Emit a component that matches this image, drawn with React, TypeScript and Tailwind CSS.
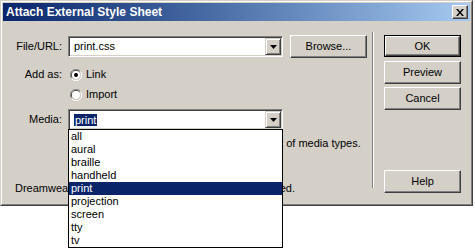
const FONT = "font-['Liberation_Sans',Arial,sans-serif]"

const MEDIA = ['all', 'aural', 'braille', 'handheld', 'print', 'projection', 'screen', 'tty', 'tv']

function DropButton() {
  return (
    <div className="w-[16px] h-full flex items-center justify-center bg-[#d4d0c8] border border-t-[#d4d0c8] border-l-[#d4d0c8] border-r-[#404040] border-b-[#404040] shadow-[inset_1px_1px_0_#ffffff,inset_-1px_-1px_0_#808080]">
      <svg width="7" height="4" viewBox="0 0 7 4">
        <path d="M0 0h7L3.5 4z" fill="#000" />
      </svg>
    </div>
  )
}

function Combo({ value, selected, h }: { value: string; selected?: boolean; h: string }) {
  return (
    <div className={`w-[215px] ${h} flex bg-white border border-t-[#808080] border-l-[#808080] border-r-white border-b-white shadow-[inset_1px_1px_0_#404040,inset_-1px_-1px_0_#d4d0c8] p-[1px]`}>
      <div className="flex-1 flex items-center pl-[4px]">
        {selected ? (
          <span className="bg-[#0a246a] text-white leading-[12px] px-[1px]">{value}</span>
        ) : (
          <span>{value}</span>
        )}
      </div>
      <DropButton />
    </div>
  )
}

function Btn({ label, def, cls = '' }: { label: string; def?: boolean; cls?: string }) {
  const inner = (
    <div className="w-full h-full flex items-center justify-center bg-[#d4d0c8] border border-t-white border-l-white border-r-[#404040] border-b-[#404040] shadow-[inset_-1px_-1px_0_#808080]">
      {label}
    </div>
  )
  if (def) {
    return <div className={`w-[77px] h-[22px] border border-black ${cls}`}>{inner}</div>
  }
  return <div className={`w-[77px] h-[23px] ${cls}`}>{inner}</div>
}

function Radio({ checked }: { checked?: boolean }) {
  return (
    <svg width="12" height="12" viewBox="0 0 12 12">
      <path d="M10.5 2.5A5.5 5.5 0 0 0 1.5 9.5" stroke="#808080" fill="none" />
      <path d="M9.6 3.2A4.5 4.5 0 0 0 2.4 8.8" stroke="#404040" fill="none" />
      <circle cx="6" cy="6" r="4" fill="#fff" />
      <path d="M1.5 9.5A5.5 5.5 0 0 0 10.5 2.5" stroke="#fff" fill="none" />
      <path d="M2.4 8.8A4.5 4.5 0 0 0 9.6 3.2" stroke="#d4d0c8" fill="none" />
      {checked && <circle cx="6" cy="6" r="2" fill="#000" />}
    </svg>
  )
}

export default function App() {
  return (
    <div className={`relative w-[475px] h-[249px] bg-white overflow-hidden text-[11px] text-black ${FONT}`}>
      <div className="w-[473px] h-[206px] border border-t-[#d4d0c8] border-l-[#d4d0c8] border-r-[#404040] border-b-[#404040]">
        <div className="h-full border border-t-white border-l-white border-r-[#808080] border-b-[#808080] bg-[#d4d0c8] p-[1px] flex flex-col">
          {/* title bar */}
          <div className="h-[18px] flex items-center justify-between bg-gradient-to-r from-[#0a246a] to-[#a6caf0] pl-[3px] pr-[2px]">
            <span className="text-white font-bold text-[12px]">Attach External Style Sheet</span>
            <div className="w-[16px] h-[14px] flex items-center justify-center bg-[#d4d0c8] border border-t-white border-l-white border-r-[#404040] border-b-[#404040] shadow-[inset_-1px_-1px_0_#808080]">
              <svg width="8" height="7" viewBox="0 0 8 7">
                <path d="M0 0h2l2 2.5L6 0h2L5 3.5 8 7H6L4 4.5 2 7H0l3-3.5z" fill="#000" />
              </svg>
            </div>
          </div>

          <div className="flex flex-1">
            {/* form */}
            <div className="w-[369px] pt-[14px]">
              <div className="flex items-center">
                <div className="w-[60px] text-right pr-[1px]">File/URL:</div>
                <div className="ml-[5px]">
                  <Combo value="print.css" h="h-[21px]" />
                </div>
                <Btn label="Browse..." cls="ml-[7px]" />
              </div>

              <div className="flex items-center h-[13px] mt-[10px]">
                <div className="w-[60px] text-right pr-[1px]">Add as:</div>
                <div className="ml-[7px] flex items-center gap-[4px]">
                  <Radio checked />
                  <span>Link</span>
                </div>
              </div>
              <div className="flex items-center h-[13px] mt-[7px]">
                <div className="ml-[67px] flex items-center gap-[4px]">
                  <Radio />
                  <span>Import</span>
                </div>
              </div>

              <div className="flex items-center mt-[8px]">
                <div className="w-[60px] text-right pr-[1px]">Media:</div>
                <div className="ml-[5px]">
                  <Combo value="print" selected h="h-[21px]" />
                </div>
              </div>

              <div className="ml-[69px] mt-[7px] leading-[13px] whitespace-nowrap">
                You may also enter a comma-separated list of media types.
              </div>

              <div className="ml-[12px] mt-[32px] leading-[13px] whitespace-nowrap">
                Dreamweaver has <span className="text-[#0000ff] underline">sample style sheets</span> to get you started.
              </div>
            </div>

            {/* separator */}
            <div className="w-[2px] h-[156px] mt-[11px] border-l border-l-[#808080] border-r border-r-white" />

            {/* buttons */}
            <div className="ml-[10px] pt-[14px] flex flex-col">
              <Btn label="OK" def />
              <Btn label="Preview" cls="mt-[4px]" />
              <Btn label="Cancel" cls="mt-[3px]" />
              <Btn label="Help" cls="mt-[60px]" />
            </div>
          </div>
        </div>
      </div>

      {/* open media list */}
      <div className="absolute left-[68px] top-[129px] w-[215px] bg-white border border-black">
        {MEDIA.map(m => (
          <div
            key={m}
            className={`h-[13px] leading-[13px] pl-[2px] ${m === 'print' ? 'bg-[#0a246a] text-white' : ''}`}
          >
            {m}
          </div>
        ))}
      </div>
    </div>
  )
}
